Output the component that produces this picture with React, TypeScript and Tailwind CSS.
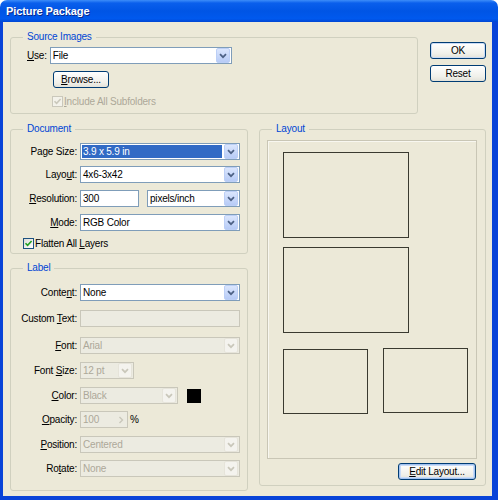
import React from 'react'
import clsx from 'clsx'

function Mn({ children }: { children: React.ReactNode }) {
  return <span className="underline underline-offset-[1px]">{children}</span>
}

function Arrow({ disabled }: { disabled?: boolean }) {
  return (
    <span
      className={clsx(
        'mr-px ml-auto flex h-[15px] w-[14px] shrink-0 items-center justify-center rounded-[2px] border',
        disabled
          ? 'border-[#e6e4da] bg-[#f4f3ee]'
          : 'border-[#bccff6] bg-[linear-gradient(#dbe6fd,#b7cbf6)]'
      )}
    >
      <svg width="8" height="6" viewBox="0 0 8 6">
        <path
          d="M1 1.2 L4 4.2 L7 1.2"
          fill="none"
          stroke={disabled ? '#c9c7ba' : '#4d6185'}
          strokeWidth="1.7"
        />
      </svg>
    </span>
  )
}

function Combo({
  w,
  value,
  disabled,
  selected,
  className,
}: {
  w: string
  value: string
  disabled?: boolean
  selected?: boolean
  className?: string
}) {
  return (
    <div
      className={clsx(
        'flex h-[17px] shrink-0 items-center border',
        w,
        disabled ? 'border-[#c9c7ba] bg-[#ecebe1] text-[#aca899]' : 'border-[#7f9db9] bg-white text-black',
        className
      )}
    >
      {selected ? (
        <span className="mx-px mr-[2px] h-[13px] flex-1 bg-[#316ac5] pl-px leading-[13px] text-white">
          {value}
        </span>
      ) : (
        <span className="flex-1 pl-[2px] leading-[15px]">{value}</span>
      )}
      <Arrow disabled={disabled} />
    </div>
  )
}

function TextBox({ w, value, disabled }: { w: string; value: string; disabled?: boolean }) {
  return (
    <div
      className={clsx(
        'h-[17px] shrink-0 border pl-[2px] leading-[15px]',
        w,
        disabled ? 'border-[#c9c7ba] bg-[#ecebe1] text-[#aca899]' : 'border-[#7f9db9] bg-white'
      )}
    >
      {value}
    </div>
  )
}

function Check({ disabled }: { disabled?: boolean }) {
  return (
    <span
      className={clsx(
        'flex h-[11px] w-[11px] shrink-0 items-center justify-center border',
        disabled ? 'border-[#cac8bb] bg-[#f3f2ea]' : 'border-[#1c5180] bg-[linear-gradient(135deg,#dcdcd7,#ffffff)]'
      )}
    >
      <svg width="9" height="9" viewBox="0 0 9 9">
        <path
          d="M1.5 4.2 L3.6 6.4 L7.6 2"
          fill="none"
          stroke={disabled ? '#cac8bb' : '#21a121'}
          strokeWidth="1.6"
        />
      </svg>
    </span>
  )
}

function Button({
  w,
  children,
  glow,
  className,
}: {
  w: string
  children: React.ReactNode
  glow?: 'soft' | 'strong'
  className?: string
}) {
  return (
    <div
      className={clsx(
        'flex h-[17px] items-center justify-center rounded-[3px] border border-[#003c74] bg-[linear-gradient(#ffffff,#f0f0ea_70%,#e3e2d9)]',
        w,
        glow === 'soft' && 'shadow-[inset_0_0_0_1px_#c9dbf6]',
        glow === 'strong' && 'shadow-[inset_0_0_0_1px_#a3c3f0,inset_0_0_0_2px_#cadcf7]',
        className
      )}
    >
      {children}
    </div>
  )
}

function Group({
  title,
  className,
  children,
}: {
  title: string
  className?: string
  children: React.ReactNode
}) {
  return (
    <fieldset className={clsx('rounded-[3px] border border-[#d0d0bf]', className)}>
      <legend className="ml-[12px] px-[4px] leading-[12px] text-[#0046d5]">{title}</legend>
      {children}
    </fieldset>
  )
}

function Row({
  label,
  className,
  children,
}: {
  label: React.ReactNode
  className?: string
  children: React.ReactNode
}) {
  return (
    <div className={clsx('flex h-[17px] items-center', className)}>
      <span className="w-[69px] shrink-0 pr-[3px] text-right">{label}</span>
      {children}
    </div>
  )
}

export default function App() {
  return (
    <div className="flex h-[500px] w-[498px] flex-col bg-white font-['Liberation_Sans',Arial,sans-serif] text-[10px] leading-[13px] tracking-[-0.2px] text-black">
      <div className="flex h-[22px] shrink-0 items-center rounded-t-[7px] bg-[linear-gradient(#3d8df9_0%,#0a5fec_14%,#0055e5_50%,#0059ee_85%,#0046d3_100%)] pl-[6px] text-[11px] font-bold tracking-[-0.1px] text-white [text-shadow:1px_1px_0_#0a2a8a]">
        Picture Package
      </div>
      <div className="flex flex-1 flex-col border-r-[6px] border-b-[4px] border-l-[3px] border-[#0843d8] bg-[#ece9d8]">
        <div className="mt-[9px] flex items-start pl-[7px]">
          <Group title="Source Images" className="w-[408px] pb-[5px]">
            <div className="mt-[4px] flex h-[17px] items-center pl-[16px]">
              <span className="pr-[3px]">
                <Mn>U</Mn>se:
              </span>
              <Combo w="w-[182px]" value="File" />
            </div>
            <Button w="w-[56px]" className="mt-[7px] ml-[42px]">
              <span>
                <Mn>B</Mn>rowse...
              </span>
            </Button>
            <div className="mt-[7px] ml-[41px] flex h-[13px] items-center gap-[1px] text-[#aca899]">
              <Check disabled />
              <span>
                <Mn>I</Mn>nclude All Subfolders
              </span>
            </div>
          </Group>
          <div className="mt-[11px] ml-[12px] flex flex-col gap-[6px]">
            <Button w="w-[56px]" glow="soft">
              OK
            </Button>
            <Button w="w-[56px]">Reset</Button>
          </div>
        </div>

        <div className="mt-[9px] flex items-start gap-[11px] pl-[7px]">
          <div className="flex w-[238px] flex-col">
            <Group title="Document" className="pb-[3px]">
              <Row className="mt-[8px]" label={<>Pa<Mn>g</Mn>e Size:</>}>
                <Combo w="w-[160px]" value="3.9 x 5.9 in" selected />
              </Row>
              <Row className="mt-[6px]" label={<>Layo<Mn>u</Mn>t:</>}>
                <Combo w="w-[160px]" value="4x6-3x42" />
              </Row>
              <Row className="mt-[7px]" label={<><Mn>R</Mn>esolution:</>}>
                <TextBox w="w-[59px]" value="300" />
                <Combo w="w-[93px]" value="pixels/inch" className="ml-[8px]" />
              </Row>
              <Row className="mt-[7px]" label={<><Mn>M</Mn>ode:</>}>
                <Combo w="w-[160px]" value="RGB Color" />
              </Row>
              <div className="mt-[6px] ml-[12px] flex h-[13px] items-center gap-[1px]">
                <Check />
                <span>
                  Flatten All <Mn>L</Mn>ayers
                </span>
              </div>
            </Group>

            <Group title="Label" className="mt-[8px] pb-[13px]">
              <Row className="mt-[10px]" label={<>Conte<Mn>n</Mn>t:</>}>
                <Combo w="w-[160px]" value="None" />
              </Row>
              <Row className="mt-[9px]" label={<>Custom <Mn>T</Mn>ext:</>}>
                <TextBox w="w-[160px]" value="" disabled />
              </Row>
              <Row className="mt-[10px]" label={<><Mn>F</Mn>ont:</>}>
                <Combo w="w-[160px]" value="Arial" disabled />
              </Row>
              <Row className="mt-[8px]" label={<>Font <Mn>S</Mn>ize:</>}>
                <Combo w="w-[54px]" value="12 pt" disabled />
              </Row>
              <Row className="mt-[8px]" label={<><Mn>C</Mn>olor:</>}>
                <Combo w="w-[98px]" value="Black" disabled />
                <span className="ml-[9px] h-[14px] w-[14px] bg-black" />
              </Row>
              <Row className="mt-[7px]" label={<><Mn>O</Mn>pacity:</>}>
                <div className="flex h-[17px] w-[48px] items-center border border-[#c9c7ba] bg-[#ecebe1] pl-[2px] text-[#aca899]">
                  <span className="flex-1">100</span>
                  <svg width="6" height="8" viewBox="0 0 6 8" className="mr-[3px]">
                    <path d="M1.5 1 L4.5 4 L1.5 7" fill="none" stroke="#c9c7ba" strokeWidth="1.4" />
                  </svg>
                </div>
                <span className="ml-[2px]">%</span>
              </Row>
              <Row className="mt-[8px]" label={<><Mn>P</Mn>osition:</>}>
                <Combo w="w-[160px]" value="Centered" disabled />
              </Row>
              <Row className="mt-[7px]" label={<>Ro<Mn>t</Mn>ate:</>}>
                <Combo w="w-[160px]" value="None" disabled />
              </Row>
            </Group>
          </div>

          <Group title="Layout" className="flex w-[227px] flex-col pb-[5px]">
            <div className="mt-[5px] ml-[7px] flex h-[319px] w-[210px] flex-col border border-[#c9c6b5] pt-[11px] pl-[15px] shadow-[inset_1px_1px_0_#f8f7f0]">
              <div className="h-[86px] w-[126px] border border-[#3a3a30]" />
              <div className="mt-[9px] h-[86px] w-[126px] border border-[#3a3a30]" />
              <div className="mt-[15px] flex items-start gap-[15px]">
                <div className="mt-px h-[65px] w-[85px] border border-[#3a3a30]" />
                <div className="h-[65px] w-[85px] border border-[#3a3a30]" />
              </div>
            </div>
            <Button w="w-[78px]" glow="strong" className="mt-[4px] mr-[9px] self-end">
              <span>
                <Mn>E</Mn>dit Layout...
              </span>
            </Button>
          </Group>
        </div>
      </div>
    </div>
  )
}
